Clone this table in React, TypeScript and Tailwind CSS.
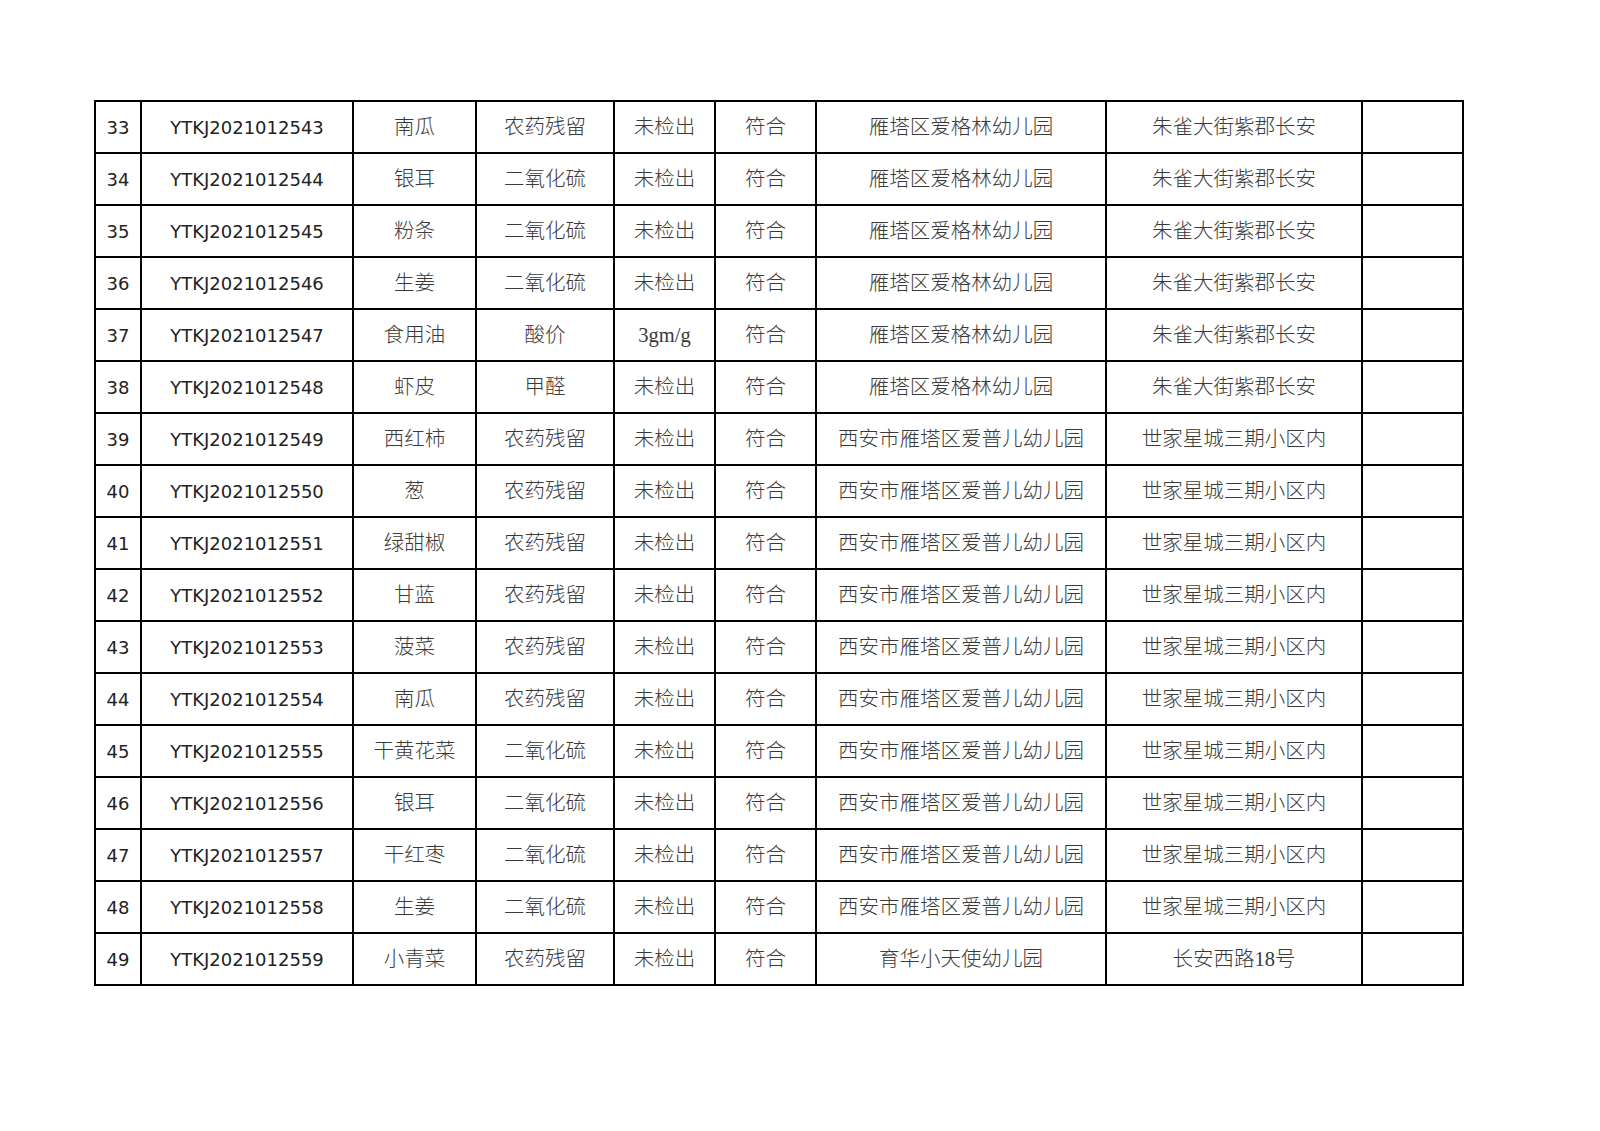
const rows: [number, string, string, string, string, string, string][] = [
  [33, "南瓜", "农药残留", "未检出", "符合", "雁塔区爱格林幼儿园", "朱雀大街紫郡长安"],
  [34, "银耳", "二氧化硫", "未检出", "符合", "雁塔区爱格林幼儿园", "朱雀大街紫郡长安"],
  [35, "粉条", "二氧化硫", "未检出", "符合", "雁塔区爱格林幼儿园", "朱雀大街紫郡长安"],
  [36, "生姜", "二氧化硫", "未检出", "符合", "雁塔区爱格林幼儿园", "朱雀大街紫郡长安"],
  [37, "食用油", "酸价", "3gm/g", "符合", "雁塔区爱格林幼儿园", "朱雀大街紫郡长安"],
  [38, "虾皮", "甲醛", "未检出", "符合", "雁塔区爱格林幼儿园", "朱雀大街紫郡长安"],
  [39, "西红柿", "农药残留", "未检出", "符合", "西安市雁塔区爱普儿幼儿园", "世家星城三期小区内"],
  [40, "葱", "农药残留", "未检出", "符合", "西安市雁塔区爱普儿幼儿园", "世家星城三期小区内"],
  [41, "绿甜椒", "农药残留", "未检出", "符合", "西安市雁塔区爱普儿幼儿园", "世家星城三期小区内"],
  [42, "甘蓝", "农药残留", "未检出", "符合", "西安市雁塔区爱普儿幼儿园", "世家星城三期小区内"],
  [43, "菠菜", "农药残留", "未检出", "符合", "西安市雁塔区爱普儿幼儿园", "世家星城三期小区内"],
  [44, "南瓜", "农药残留", "未检出", "符合", "西安市雁塔区爱普儿幼儿园", "世家星城三期小区内"],
  [45, "干黄花菜", "二氧化硫", "未检出", "符合", "西安市雁塔区爱普儿幼儿园", "世家星城三期小区内"],
  [46, "银耳", "二氧化硫", "未检出", "符合", "西安市雁塔区爱普儿幼儿园", "世家星城三期小区内"],
  [47, "干红枣", "二氧化硫", "未检出", "符合", "西安市雁塔区爱普儿幼儿园", "世家星城三期小区内"],
  [48, "生姜", "二氧化硫", "未检出", "符合", "西安市雁塔区爱普儿幼儿园", "世家星城三期小区内"],
  [49, "小青菜", "农药残留", "未检出", "符合", "育华小天使幼儿园", "长安西路18号"],
];

const cn = "font-['Liberation_Serif','Noto_Sans_CJK_SC',serif] text-[20.5px] font-light text-[#3a3a3a]";
const num = "font-['DejaVu_Sans',sans-serif] text-[18px] text-[#222]";
const cell = "border-2 border-black text-center align-middle p-0";

export default function App() {
  return (
    <div className="w-[1600px] h-[1131px] bg-white pt-[100px] pl-[94px]">
      <table className="border-collapse table-fixed w-[1370px]">
        <colgroup>
          <col className="w-[46px]" />
          <col className="w-[212px]" />
          <col className="w-[123px]" />
          <col className="w-[138px]" />
          <col className="w-[101px]" />
          <col className="w-[101px]" />
          <col className="w-[290px]" />
          <col className="w-[256px]" />
          <col className="w-[101px]" />
        </colgroup>
        <tbody>
          {rows.map((r) => (
            <tr key={r[0]} className="h-[52px]">
              <td className={`${cell} ${num}`}>{r[0]}</td>
              <td className={`${cell} ${num}`}>YTKJ20210125{r[0] + 10}</td>
              <td className={`${cell} ${cn}`}>{r[1]}</td>
              <td className={`${cell} ${cn}`}>{r[2]}</td>
              <td className={`${cell} ${cn}`}>{r[3]}</td>
              <td className={`${cell} ${cn}`}>{r[4]}</td>
              <td className={`${cell} ${cn}`}>{r[5]}</td>
              <td className={`${cell} ${cn}`}>{r[6]}</td>
              <td className={cell}></td>
            </tr>
          ))}
        </tbody>
      </table>
    </div>
  );
}
